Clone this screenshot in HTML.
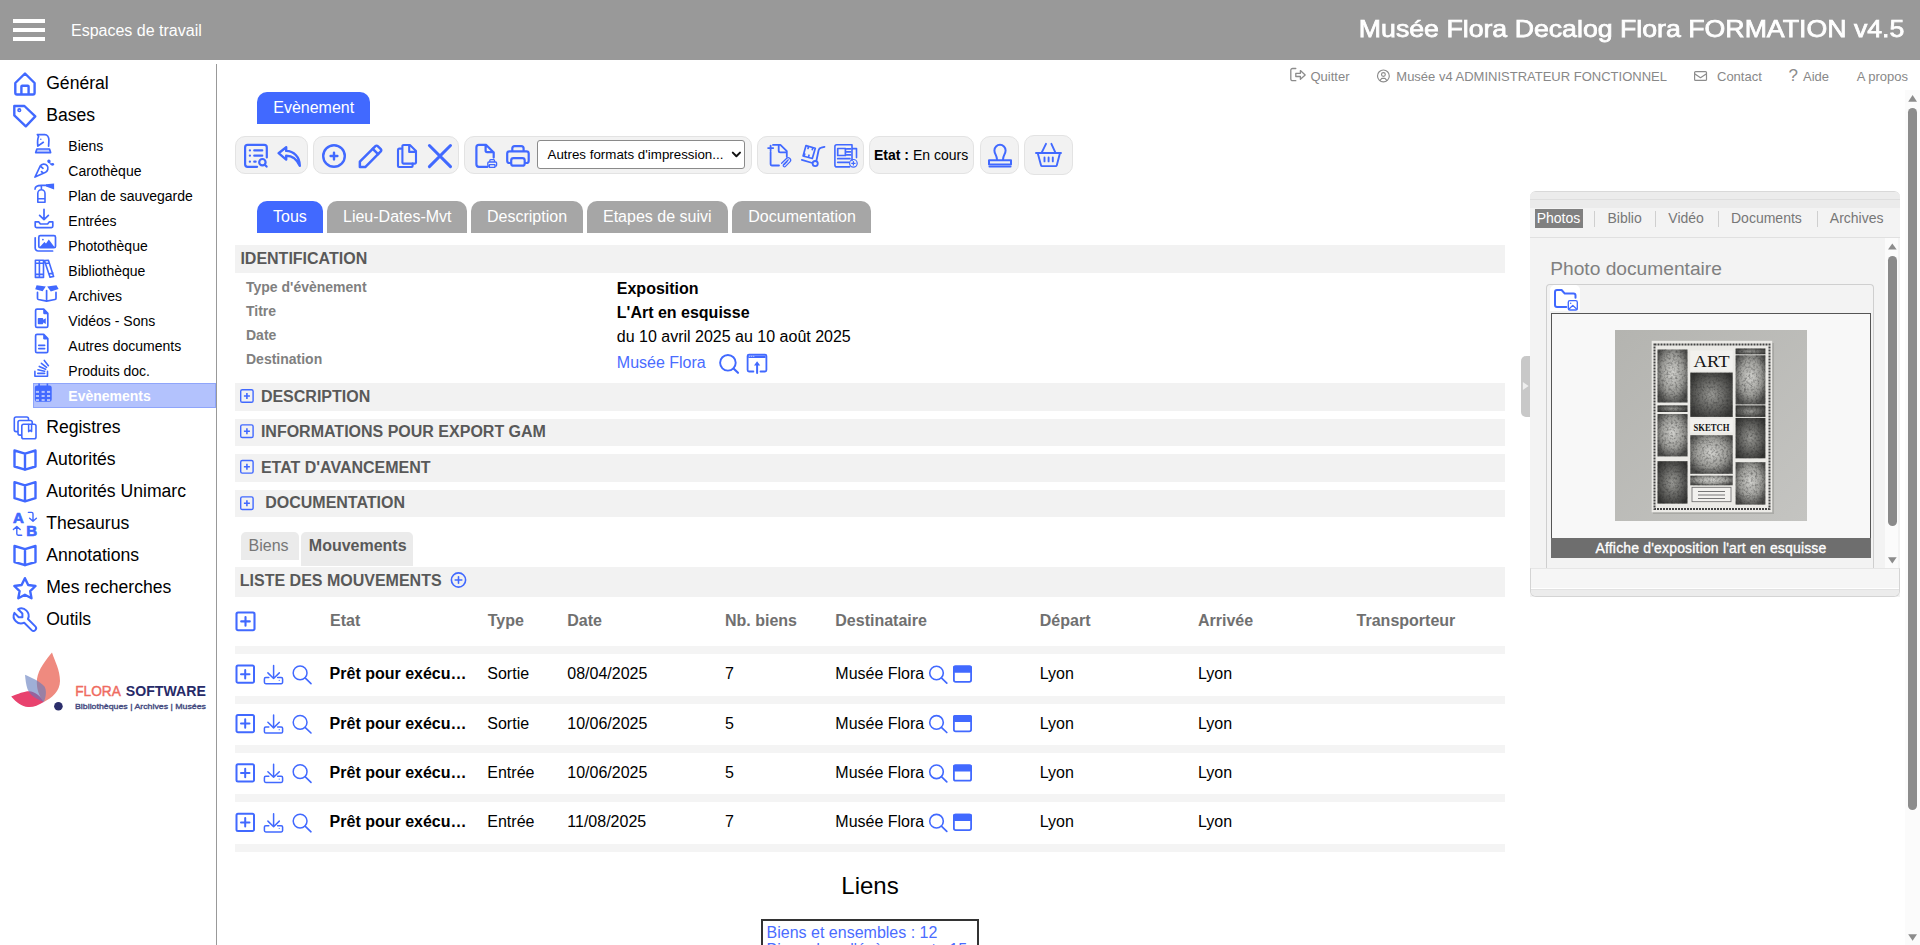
<!DOCTYPE html><html><head><meta charset="utf-8"><style>
html,body{margin:0;padding:0;}
body{width:1920px;height:945px;overflow:hidden;position:relative;background:#fff;font-family:"Liberation Sans",sans-serif;}
.t{position:absolute;white-space:nowrap;line-height:1;}
.r{position:absolute;}
svg.ov{position:absolute;left:0;top:0;}
</style></head><body>
<div class="r" style="left:0px;top:0px;width:1920px;height:60px;background:#999999;"></div>
<div class="r" style="left:13px;top:19px;width:32px;height:4px;background:#fff;"></div>
<div class="r" style="left:13px;top:28px;width:32px;height:4px;background:#fff;"></div>
<div class="r" style="left:13px;top:37px;width:32px;height:4px;background:#fff;"></div>
<div class="t" style="left:71px;top:23.00px;font-size:16px;color:#fff;font-weight:normal;">Espaces de travail</div>
<div class="t" style="right:15.4px;top:17px;font-size:24px;color:#fff;font-weight:normal;-webkit-text-stroke:0.75px #fff;transform:scaleX(1.1125);transform-origin:100% 50%;">Musée Flora Decalog Flora FORMATION v4.5</div>
<div class="r" style="left:216px;top:64px;width:1px;height:881px;background:#999999;"></div>
<div class="t" style="left:46.2px;top:75.00px;font-size:17.6px;color:#000;font-weight:normal;">Général</div>
<div class="t" style="left:46.2px;top:107.00px;font-size:17.6px;color:#000;font-weight:normal;">Bases</div>
<div class="t" style="left:46.2px;top:419.00px;font-size:17.6px;color:#000;font-weight:normal;">Registres</div>
<div class="t" style="left:46.2px;top:451.00px;font-size:17.6px;color:#000;font-weight:normal;">Autorités</div>
<div class="t" style="left:46.2px;top:483.00px;font-size:17.6px;color:#000;font-weight:normal;">Autorités Unimarc</div>
<div class="t" style="left:46.2px;top:515.00px;font-size:17.6px;color:#000;font-weight:normal;">Thesaurus</div>
<div class="t" style="left:46.2px;top:547.00px;font-size:17.6px;color:#000;font-weight:normal;">Annotations</div>
<div class="t" style="left:46.2px;top:579.00px;font-size:17.6px;color:#000;font-weight:normal;">Mes recherches</div>
<div class="t" style="left:46.2px;top:611.00px;font-size:17.6px;color:#000;font-weight:normal;">Outils</div>
<div class="r" style="left:33px;top:383px;width:183px;height:25px;background:#b3c2fd;box-sizing:border-box;border:1px solid #8fa5fb;"></div>
<div class="t" style="left:68.3px;top:139.00px;font-size:14px;color:#000;font-weight:normal;">Biens</div>
<div class="t" style="left:68.3px;top:164.00px;font-size:14px;color:#000;font-weight:normal;">Carothèque</div>
<div class="t" style="left:68.3px;top:189.00px;font-size:14px;color:#000;font-weight:normal;">Plan de sauvegarde</div>
<div class="t" style="left:68.3px;top:214.00px;font-size:14px;color:#000;font-weight:normal;">Entrées</div>
<div class="t" style="left:68.3px;top:239.00px;font-size:14px;color:#000;font-weight:normal;">Photothèque</div>
<div class="t" style="left:68.3px;top:264.00px;font-size:14px;color:#000;font-weight:normal;">Bibliothèque</div>
<div class="t" style="left:68.3px;top:289.00px;font-size:14px;color:#000;font-weight:normal;">Archives</div>
<div class="t" style="left:68.3px;top:314.00px;font-size:14px;color:#000;font-weight:normal;">Vidéos - Sons</div>
<div class="t" style="left:68.3px;top:339.00px;font-size:14px;color:#000;font-weight:normal;">Autres documents</div>
<div class="t" style="left:68.3px;top:364.00px;font-size:14px;color:#000;font-weight:normal;">Produits doc.</div>
<div class="t" style="left:68.3px;top:389.00px;font-size:14px;color:#fff;font-weight:bold;">Evènements</div>
<div class="t" style="left:1310.5px;top:70.00px;font-size:13px;color:#888;font-weight:normal;">Quitter</div>
<div class="t" style="left:1396.3px;top:70.00px;font-size:13px;color:#888;font-weight:normal;">Musée v4 ADMINISTRATEUR FONCTIONNEL</div>
<div class="t" style="left:1717px;top:70.00px;font-size:13px;color:#888;font-weight:normal;">Contact</div>
<div class="t" style="left:1803px;top:70.00px;font-size:13px;color:#888;font-weight:normal;">Aide</div>
<div class="t" style="left:1856.7px;top:70.00px;font-size:13px;color:#888;font-weight:normal;">A propos</div>
<div class="r" style="left:1905px;top:90px;width:15px;height:855px;background:#fbfbfb;"></div>
<div class="r" style="left:1908px;top:108px;width:9px;height:702px;background:#8c8c8c;border-radius:5px;"></div>
<div class="r" style="left:257px;top:92px;width:113px;height:32px;background:#4169ff;border-radius:10px 10px 0 0;"></div>
<div class="t" style="left:273.25px;top:100.00px;font-size:16px;color:#fff;font-weight:normal;">Evènement</div>
<div class="r" style="left:235px;top:136px;width:73px;height:38px;background:#f2f2f2;box-sizing:border-box;border:1px solid #e3e3e3;border-radius:10px;"></div>
<div class="r" style="left:313px;top:136px;width:146px;height:38px;background:#f2f2f2;box-sizing:border-box;border:1px solid #e3e3e3;border-radius:10px;"></div>
<div class="r" style="left:464px;top:136px;width:288px;height:38px;background:#f2f2f2;box-sizing:border-box;border:1px solid #e3e3e3;border-radius:10px;"></div>
<div class="r" style="left:757px;top:136px;width:107px;height:38px;background:#f2f2f2;box-sizing:border-box;border:1px solid #e3e3e3;border-radius:10px;"></div>
<div class="r" style="left:869px;top:136px;width:104.5px;height:38px;background:#f2f2f2;box-sizing:border-box;border:1px solid #e3e3e3;border-radius:10px;"></div>
<div class="r" style="left:979.5px;top:136px;width:39.0px;height:38px;background:#f2f2f2;box-sizing:border-box;border:1px solid #e3e3e3;border-radius:10px;"></div>
<div class="r" style="left:1024px;top:135px;width:48.5px;height:40px;background:#f2f2f2;box-sizing:border-box;border:1px solid #e3e3e3;border-radius:10px;"></div>
<div class="r" style="left:537px;top:140px;width:208px;height:29px;background:#fff;box-sizing:border-box;border:1px solid #8a8a8a;border-radius:3px;"></div>
<div class="t" style="left:547.5px;top:148.00px;font-size:13.333px;color:#000;font-weight:normal;">Autres formats d'impression...</div>
<div class="t" style="left:874px;top:148px;font-size:14px;"><b>Etat :</b> En cours</div>
<div class="r" style="left:257px;top:201px;width:66px;height:32px;background:#4169ff;border-radius:10px 10px 0 0;"></div>
<div class="t" style="left:273px;top:209.00px;font-size:16px;color:#fff;font-weight:normal;">Tous</div>
<div class="r" style="left:327px;top:201px;width:140px;height:32px;background:#a6a6a6;border-radius:10px 10px 0 0;"></div>
<div class="t" style="left:343px;top:209.00px;font-size:16px;color:#fff;font-weight:normal;">Lieu-Dates-Mvt</div>
<div class="r" style="left:471px;top:201px;width:112px;height:32px;background:#a6a6a6;border-radius:10px 10px 0 0;"></div>
<div class="t" style="left:487px;top:209.00px;font-size:16px;color:#fff;font-weight:normal;">Description</div>
<div class="r" style="left:587px;top:201px;width:141px;height:32px;background:#a6a6a6;border-radius:10px 10px 0 0;"></div>
<div class="t" style="left:603px;top:209.00px;font-size:16px;color:#fff;font-weight:normal;">Etapes de suivi</div>
<div class="r" style="left:732px;top:201px;width:139px;height:32px;background:#a6a6a6;border-radius:10px 10px 0 0;"></div>
<div class="t" style="left:748.3px;top:209.00px;font-size:16px;color:#fff;font-weight:normal;">Documentation</div>
<div class="r" style="left:235px;top:245px;width:1270px;height:28px;background:#f2f2f2;"></div>
<div class="t" style="left:240.4px;top:251.00px;font-size:16px;color:#595959;font-weight:bold;">IDENTIFICATION</div>
<div class="t" style="left:246px;top:280.00px;font-size:14px;color:#808080;font-weight:bold;">Type d'évènement</div>
<div class="t" style="left:246px;top:304.00px;font-size:14px;color:#808080;font-weight:bold;">Titre</div>
<div class="t" style="left:246px;top:328.00px;font-size:14px;color:#808080;font-weight:bold;">Date</div>
<div class="t" style="left:246px;top:352.00px;font-size:14px;color:#808080;font-weight:bold;">Destination</div>
<div class="t" style="left:616.8px;top:281.00px;font-size:16px;color:#000;font-weight:bold;">Exposition</div>
<div class="t" style="left:616.8px;top:305.00px;font-size:16px;color:#000;font-weight:bold;">L'Art en esquisse</div>
<div class="t" style="left:616.8px;top:329.00px;font-size:16px;color:#000;font-weight:normal;">du 10 avril 2025 au 10 août 2025</div>
<div class="t" style="left:616.8px;top:355.00px;font-size:16px;color:#4a6cff;font-weight:normal;">Musée Flora</div>
<div class="r" style="left:235px;top:383px;width:1270px;height:28px;background:#f2f2f2;"></div>
<div class="t" style="left:260.9px;top:389.00px;font-size:16px;color:#595959;font-weight:bold;">DESCRIPTION</div>
<div class="r" style="left:235px;top:419px;width:1270px;height:27px;background:#f2f2f2;"></div>
<div class="t" style="left:260.9px;top:424.00px;font-size:16px;color:#595959;font-weight:bold;">INFORMATIONS POUR EXPORT GAM</div>
<div class="r" style="left:235px;top:454px;width:1270px;height:28px;background:#f2f2f2;"></div>
<div class="t" style="left:260.9px;top:460.00px;font-size:16px;color:#595959;font-weight:bold;">ETAT D'AVANCEMENT</div>
<div class="r" style="left:235px;top:490px;width:1270px;height:27px;background:#f2f2f2;"></div>
<div class="t" style="left:265.2px;top:495.00px;font-size:16px;color:#595959;font-weight:bold;">DOCUMENTATION</div>
<div class="r" style="left:241px;top:532px;width:58px;height:28px;background:#ebebeb;border-radius:5px 5px 0 0;"></div>
<div class="r" style="left:301px;top:532px;width:112px;height:34px;background:#ebebeb;border-radius:5px 5px 0 0;"></div>
<div class="t" style="left:248.5px;top:538.00px;font-size:16px;color:#777;font-weight:normal;">Biens</div>
<div class="t" style="left:308.8px;top:538.00px;font-size:16px;color:#595959;font-weight:bold;">Mouvements</div>
<div class="r" style="left:235px;top:567px;width:1270px;height:30px;background:#f2f2f2;"></div>
<div class="t" style="left:239.8px;top:573.00px;font-size:16px;color:#595959;font-weight:bold;">LISTE DES MOUVEMENTS</div>
<div class="t" style="left:330px;top:613.00px;font-size:16px;color:#707070;font-weight:bold;">Etat</div>
<div class="t" style="left:487.7px;top:613.00px;font-size:16px;color:#707070;font-weight:bold;">Type</div>
<div class="t" style="left:567.3px;top:613.00px;font-size:16px;color:#707070;font-weight:bold;">Date</div>
<div class="t" style="left:725px;top:613.00px;font-size:16px;color:#707070;font-weight:bold;">Nb. biens</div>
<div class="t" style="left:835.3px;top:613.00px;font-size:16px;color:#707070;font-weight:bold;">Destinataire</div>
<div class="t" style="left:1039.8px;top:613.00px;font-size:16px;color:#707070;font-weight:bold;">Départ</div>
<div class="t" style="left:1198px;top:613.00px;font-size:16px;color:#707070;font-weight:bold;">Arrivée</div>
<div class="t" style="left:1356.6px;top:613.00px;font-size:16px;color:#707070;font-weight:bold;">Transporteur</div>
<div class="r" style="left:235px;top:646px;width:1270px;height:8px;background:#f4f4f4;"></div>
<div class="r" style="left:235px;top:696px;width:1270px;height:8px;background:#f4f4f4;"></div>
<div class="r" style="left:235px;top:745px;width:1270px;height:8px;background:#f4f4f4;"></div>
<div class="r" style="left:235px;top:794px;width:1270px;height:8px;background:#f4f4f4;"></div>
<div class="r" style="left:235px;top:844px;width:1270px;height:8px;background:#f4f4f4;"></div>
<div class="t" style="left:329.6px;top:666.00px;font-size:16px;color:#000;font-weight:bold;">Prêt pour exécu…</div>
<div class="t" style="left:487.3px;top:666.00px;font-size:16px;color:#000;font-weight:normal;">Sortie</div>
<div class="t" style="left:567.3px;top:666.00px;font-size:16px;color:#000;font-weight:normal;">08/04/2025</div>
<div class="t" style="left:725px;top:666.00px;font-size:16px;color:#000;font-weight:normal;">7</div>
<div class="t" style="left:835.3px;top:666.00px;font-size:16px;color:#000;font-weight:normal;">Musée Flora</div>
<div class="t" style="left:1039.8px;top:666.00px;font-size:16px;color:#000;font-weight:normal;">Lyon</div>
<div class="t" style="left:1198px;top:666.00px;font-size:16px;color:#000;font-weight:normal;">Lyon</div>
<div class="t" style="left:329.6px;top:716.00px;font-size:16px;color:#000;font-weight:bold;">Prêt pour exécu…</div>
<div class="t" style="left:487.3px;top:716.00px;font-size:16px;color:#000;font-weight:normal;">Sortie</div>
<div class="t" style="left:567.3px;top:716.00px;font-size:16px;color:#000;font-weight:normal;">10/06/2025</div>
<div class="t" style="left:725px;top:716.00px;font-size:16px;color:#000;font-weight:normal;">5</div>
<div class="t" style="left:835.3px;top:716.00px;font-size:16px;color:#000;font-weight:normal;">Musée Flora</div>
<div class="t" style="left:1039.8px;top:716.00px;font-size:16px;color:#000;font-weight:normal;">Lyon</div>
<div class="t" style="left:1198px;top:716.00px;font-size:16px;color:#000;font-weight:normal;">Lyon</div>
<div class="t" style="left:329.6px;top:765.00px;font-size:16px;color:#000;font-weight:bold;">Prêt pour exécu…</div>
<div class="t" style="left:487.3px;top:765.00px;font-size:16px;color:#000;font-weight:normal;">Entrée</div>
<div class="t" style="left:567.3px;top:765.00px;font-size:16px;color:#000;font-weight:normal;">10/06/2025</div>
<div class="t" style="left:725px;top:765.00px;font-size:16px;color:#000;font-weight:normal;">5</div>
<div class="t" style="left:835.3px;top:765.00px;font-size:16px;color:#000;font-weight:normal;">Musée Flora</div>
<div class="t" style="left:1039.8px;top:765.00px;font-size:16px;color:#000;font-weight:normal;">Lyon</div>
<div class="t" style="left:1198px;top:765.00px;font-size:16px;color:#000;font-weight:normal;">Lyon</div>
<div class="t" style="left:329.6px;top:814.00px;font-size:16px;color:#000;font-weight:bold;">Prêt pour exécu…</div>
<div class="t" style="left:487.3px;top:814.00px;font-size:16px;color:#000;font-weight:normal;">Entrée</div>
<div class="t" style="left:567.3px;top:814.00px;font-size:16px;color:#000;font-weight:normal;">11/08/2025</div>
<div class="t" style="left:725px;top:814.00px;font-size:16px;color:#000;font-weight:normal;">7</div>
<div class="t" style="left:835.3px;top:814.00px;font-size:16px;color:#000;font-weight:normal;">Musée Flora</div>
<div class="t" style="left:1039.8px;top:814.00px;font-size:16px;color:#000;font-weight:normal;">Lyon</div>
<div class="t" style="left:1198px;top:814.00px;font-size:16px;color:#000;font-weight:normal;">Lyon</div>
<div class="t" style="left:235px;width:1270px;text-align:center;top:874px;font-size:24px;">Liens</div>
<div class="r" style="left:761px;top:919px;width:218px;height:81px;background:#fff;box-sizing:border-box;border:2px solid #333;"></div>
<div class="t" style="left:766.6px;top:925.00px;font-size:16px;color:#4a6cff;font-weight:normal;">Biens et ensembles : 12</div>
<div class="t" style="left:766.6px;top:942.00px;font-size:16px;color:#4a6cff;font-weight:normal;">Biens dans l'évènement : 15</div>
<div class="r" style="left:1530px;top:191px;width:370px;height:406px;background:#f3f3f3;box-sizing:border-box;border-top:1px solid #d9d9d9;border-radius:6px 6px 0 0;"></div>
<div class="r" style="left:1530px;top:192px;width:370px;height:7px;background:#ececec;border-radius:5px 5px 0 0;"></div>
<div class="r" style="left:1530px;top:199px;width:370px;height:1px;background:#dedede;"></div>
<div class="r" style="left:1530px;top:200px;width:370px;height:8px;background:#ebebeb;"></div>
<div class="r" style="left:1530px;top:208px;width:370px;height:29px;background:#f3f3f3;"></div>
<div class="r" style="left:1530px;top:237px;width:370px;height:1px;background:#e0e0e0;"></div>
<div class="r" style="left:1535px;top:209px;width:48px;height:19px;background:#808080;"></div>
<div class="t" style="left:1536.7px;top:211.00px;font-size:14px;color:#fff;font-weight:normal;">Photos</div>
<div class="r" style="left:1594.4px;top:211px;width:1.0px;height:16px;background:#cfcfcf;"></div>
<div class="r" style="left:1655.4px;top:211px;width:1.0px;height:16px;background:#cfcfcf;"></div>
<div class="r" style="left:1717.9px;top:211px;width:1.0px;height:16px;background:#cfcfcf;"></div>
<div class="r" style="left:1816.5px;top:211px;width:1.0px;height:16px;background:#cfcfcf;"></div>
<div class="t" style="left:1607.5px;top:211.00px;font-size:14px;color:#777;font-weight:normal;">Biblio</div>
<div class="t" style="left:1668.3px;top:211.00px;font-size:14px;color:#777;font-weight:normal;">Vidéo</div>
<div class="t" style="left:1731px;top:211.00px;font-size:14px;color:#777;font-weight:normal;">Documents</div>
<div class="t" style="left:1829.8px;top:211.00px;font-size:14px;color:#777;font-weight:normal;">Archives</div>
<div class="r" style="left:1884.7px;top:238px;width:13.799999999999955px;height:329.5px;background:#fbfbfb;"></div>
<div class="r" style="left:1888.2px;top:256px;width:8.5px;height:269.70000000000005px;background:#8a8a8a;border-radius:5px;"></div>
<div class="t" style="left:1550.2px;top:259.00px;font-size:19.2px;color:#808080;font-weight:normal;">Photo documentaire</div>
<div class="r" style="left:1546px;top:284px;width:328px;height:286px;background:#f3f3f3;box-sizing:border-box;border:1px solid #cfcfcf;border-bottom:none;border-radius:4px 4px 0 0;"></div>
<div class="r" style="left:1550px;top:284.5px;width:30px;height:26.5px;background:#fff;border-radius:5px 5px 0 0;"></div>
<div class="r" style="left:1551px;top:312.8px;width:320px;height:245.2px;background:#f8f8f8;box-sizing:border-box;border:1px solid #555;border-bottom:none;"></div>
<div class="r" style="left:1551px;top:538px;width:320px;height:20px;background:#6e6e6e;"></div>
<div class="t" style="left:1551px;width:320px;text-align:center;top:541px;font-size:14px;color:#fff;letter-spacing:0.17px;-webkit-text-stroke:0.3px #fff;">Affiche d'exposition l'art en esquisse</div>
<div class="r" style="left:1530px;top:568px;width:370px;height:29px;background:#f6f6f6;box-sizing:border-box;border:1px solid #d4d4d4;border-top-color:#e6e6e6;border-radius:0 0 6px 6px;"></div>
<div class="r" style="left:1531px;top:588px;width:368px;height:1px;background:#ffffff;"></div>
<div class="r" style="left:1531px;top:589px;width:368px;height:1px;background:#e2e2e2;"></div>
<div class="r" style="left:1531px;top:590px;width:368px;height:6px;background:#ececec;border-radius:0 0 5px 5px;"></div>
<div class="r" style="left:1521px;top:356px;width:9px;height:61px;background:#c8c8c8;border-radius:5px 0 0 5px;"></div>
<svg class="ov" width="1920" height="945" viewBox="0 0 1920 945"><path d="M52 652.6 C46 660 38.5 669 37 679 C36 688 39 696 43.8 702 C52 698 60 691 60 681 C60 670 55 662 52 652.6 Z" fill="#ef8a7f"/><path d="M11.2 696.4 C18 693.8 24.5 691.2 29 691.2 C35 691.5 40.5 696 43.8 702 C38 705.5 33 707.5 28 707 C22 706.5 16 702 11.2 696.4 Z" fill="#e8426e"/><path d="M25 674.8 C31 677.5 39.5 681 44.5 686.5 C46.5 690 46.5 696 43.8 702 C36 699 30 695.5 27.5 689 C26 685 25.5 680 25 674.8 Z" fill="#5f79bd" fill-opacity="0.6"/><circle cx="58.4" cy="706.2" r="4.3" fill="#2b2e6b"/><text x="75.2" y="695.6" font-family="Liberation Sans" font-size="15" fill="#ef6b60" stroke="#ef6b60" stroke-width="0.45" textLength="45.6" lengthAdjust="spacingAndGlyphs">FLORA</text><text x="125.8" y="695.6" font-family="Liberation Sans" font-weight="bold" font-size="15" fill="#272a68" textLength="80" lengthAdjust="spacingAndGlyphs">SOFTWARE</text><text x="75" y="709.4" font-family="Liberation Sans" font-size="8" fill="#454a80" stroke="#454a80" stroke-width="0.35" textLength="131" lengthAdjust="spacingAndGlyphs">Bibliothèques | Archives | Musées</text><defs><linearGradient id="pg" x1="0" y1="0" x2="1" y2="1"><stop offset="0" stop-color="#b4b4b0"/><stop offset="1" stop-color="#c4c4c1"/></linearGradient><filter id="tex" x="0" y="0" width="1" height="1"><feTurbulence type="fractalNoise" baseFrequency="0.45" numOctaves="2" seed="3" result="n"/><feColorMatrix in="n" type="matrix" values="0 0 0 0 0  0 0 0 0 0  0 0 0 0 0  0 0 0 -2.2 1.25" result="a"/><feComposite in="SourceGraphic" in2="a" operator="in"/></filter><radialGradient id="por" cx="0.5" cy="0.45" r="0.6"><stop offset="0" stop-color="#d2d2ce"/><stop offset="0.6" stop-color="#9c9c98"/><stop offset="1" stop-color="#4a4a48"/></radialGradient><radialGradient id="drk" cx="0.5" cy="0.5" r="0.6"><stop offset="0" stop-color="#9a9a96"/><stop offset="1" stop-color="#353533"/></radialGradient></defs><rect x="1615" y="330" width="192" height="191" fill="url(#pg)"/><rect x="1653" y="343" width="121" height="171" fill="#8e8e8a" opacity="0.45"/><rect x="1651.7" y="340.8" width="120.5" height="171.5" fill="#ebeae6"/><rect x="1654.5" y="344.5" width="115" height="164.5" fill="none" stroke="#444" stroke-width="2" stroke-dasharray="2 1"/><rect x="1657.5" y="349.5" width="30" height="53" fill="url(#por)"/><rect x="1657.5" y="349.5" width="30" height="53" fill="#222" filter="url(#tex)" opacity="0.45"/><rect x="1657.5" y="405.4" width="30" height="6.6" fill="url(#drk)"/><rect x="1657.5" y="405.4" width="30" height="6.6" fill="#222" filter="url(#tex)" opacity="0.45"/><rect x="1657.5" y="414" width="30" height="42.4" fill="url(#por)"/><rect x="1657.5" y="414" width="30" height="42.4" fill="#222" filter="url(#tex)" opacity="0.45"/><rect x="1657.5" y="461.2" width="30" height="42.4" fill="url(#drk)"/><rect x="1657.5" y="461.2" width="30" height="42.4" fill="#222" filter="url(#tex)" opacity="0.45"/><rect x="1690.3" y="372.6" width="42.4" height="44.3" fill="url(#drk)"/><rect x="1690.3" y="372.6" width="42.4" height="44.3" fill="#222" filter="url(#tex)" opacity="0.45"/><rect x="1690.3" y="435.2" width="42.4" height="38.6" fill="url(#por)"/><rect x="1690.3" y="435.2" width="42.4" height="38.6" fill="#222" filter="url(#tex)" opacity="0.45"/><rect x="1690.3" y="475.7" width="42.4" height="9.6" fill="url(#por)"/><rect x="1690.3" y="475.7" width="42.4" height="9.6" fill="#222" filter="url(#tex)" opacity="0.45"/><rect x="1735.6" y="355.3" width="29.8" height="49.1" fill="url(#por)"/><rect x="1735.6" y="355.3" width="29.8" height="49.1" fill="#222" filter="url(#tex)" opacity="0.45"/><rect x="1735.6" y="405.4" width="29.8" height="11.5" fill="url(#drk)"/><rect x="1735.6" y="405.4" width="29.8" height="11.5" fill="#222" filter="url(#tex)" opacity="0.45"/><rect x="1735.6" y="417.9" width="29.8" height="40.4" fill="url(#drk)"/><rect x="1735.6" y="417.9" width="29.8" height="40.4" fill="#222" filter="url(#tex)" opacity="0.45"/><rect x="1735.6" y="462.2" width="29.8" height="42.4" fill="url(#por)"/><rect x="1735.6" y="462.2" width="29.8" height="42.4" fill="#222" filter="url(#tex)" opacity="0.45"/><rect x="1735.6" y="348.5" width="29.8" height="5.8" fill="url(#drk)"/><rect x="1735.6" y="348.5" width="29.8" height="5.8" fill="#222" filter="url(#tex)" opacity="0.45"/><rect x="1690.3" y="350.5" width="42.4" height="20.2" fill="#f2f1ee"/><text x="1711.5" y="366.5" font-family="Liberation Serif" font-size="17.5" text-anchor="middle" fill="#151515" textLength="36" lengthAdjust="spacingAndGlyphs">ART</text><rect x="1690.3" y="418.8" width="42.4" height="13.5" fill="#f2f1ee"/><text x="1711.5" y="430.6" font-family="Liberation Serif" font-weight="bold" font-size="9.5" text-anchor="middle" fill="#151515" textLength="36" lengthAdjust="spacingAndGlyphs">SKETCH</text><rect x="1692" y="487.3" width="39" height="14.4" fill="#f2f1ee" stroke="#666" stroke-width="0.8"/><rect x="1698" y="491" width="27" height="1" fill="#777"/><rect x="1698" y="494.5" width="27" height="1" fill="#777"/><rect x="1698" y="498" width="27" height="1" fill="#777"/></svg>
<svg class="ov" width="1920" height="945" viewBox="0 0 1920 945"><path d="M15.3 83 V92.8 a1.7 1.7 0 0 0 1.7 1.7 H32.9 a1.7 1.7 0 0 0 1.7 -1.7 V83 L25 73.5 Z M21.4 94.5 V86.5 a0.8 0.8 0 0 1 0.8 -0.8 H27.8 a0.8 0.8 0 0 1 0.8 0.8 V94.5" fill="none" stroke="#4169ff" stroke-width="2.4" stroke-linecap="round" stroke-linejoin="round" /><path d="M14.3 106 H24.4 L35.3 116.4 L25.8 126.3 L14.3 115.3 Z" fill="none" stroke="#4169ff" stroke-width="2.4" stroke-linecap="round" stroke-linejoin="round" /><circle cx="19.3" cy="110.2" r="1.3" fill="none" stroke="#4169ff" stroke-width="1.6"/><rect x="14.3" y="417" width="14.2" height="14.6" rx="1.8" fill="#fff" stroke="#4169ff" stroke-width="1.6"/><rect x="18" y="420.5" width="14.2" height="14.6" rx="1.8" fill="#fff" stroke="#4169ff" stroke-width="1.6"/><rect x="21.8" y="424.2" width="14.2" height="14.6" rx="1.8" fill="#fff" stroke="#4169ff" stroke-width="1.6"/><path d="M31.6 424.4 V431.6 L30.1 430.2 L28.6 431.6 V424.4" fill="none" stroke="#4169ff" stroke-width="1.5" stroke-linecap="round" stroke-linejoin="round" /><path d="M14.5 450.5 L25 453.7 L35.5 450.5 V466.5 L25 469.7 L14.5 466.5 Z M25 453.7 V469.7" fill="none" stroke="#4169ff" stroke-width="2.4" stroke-linecap="round" stroke-linejoin="round" /><path d="M14.5 482.2 L25 485.4 L35.5 482.2 V498.2 L25 501.4 L14.5 498.2 Z M25 485.4 V501.4" fill="none" stroke="#4169ff" stroke-width="2.4" stroke-linecap="round" stroke-linejoin="round" /><path d="M14.5 546 L25 549.2 L35.5 546 V562 L25 565.2 L14.5 562 Z M25 549.2 V565.2" fill="none" stroke="#4169ff" stroke-width="2.4" stroke-linecap="round" stroke-linejoin="round" /><text x="13.1" y="522.8" font-family="Liberation Sans" font-weight="bold" font-size="15" fill="#4169ff" stroke="#4169ff" stroke-width="0.7">A</text><text x="26.2" y="535.8" font-family="Liberation Sans" font-weight="bold" font-size="15" fill="#4169ff" stroke="#4169ff" stroke-width="0.7">B</text><path d="M28.4 512.4 H31.6 a1.4 1.4 0 0 1 1.4 1.4 V520.8 M29.6 518.2 L33 521.2 L36.4 518.2" fill="none" stroke="#4169ff" stroke-width="1.4" stroke-linecap="round" stroke-linejoin="round" /><path d="M21.7 535.2 H18.2 a1.4 1.4 0 0 1 -1.4 -1.4 V526.6 M13.4 529.6 L16.8 526.4 L20.2 529.6" fill="none" stroke="#4169ff" stroke-width="1.4" stroke-linecap="round" stroke-linejoin="round" /><path d="M24.9 578.2 L28.2 585 L35.5 586 L30.2 591.1 L31.5 598.3 L24.9 594.8 L18.3 598.3 L19.6 591.1 L14.3 586 L21.6 585 Z" fill="none" stroke="#4169ff" stroke-width="2.4" stroke-linecap="round" stroke-linejoin="round" /><g transform="translate(10.1 604.9) scale(1.2291666666666667)" fill="none" stroke="#4169ff" stroke-width="1.6" stroke-linecap="round" stroke-linejoin="round"><path d="M7 10h3v-3l-3.5 -3.5a6 6 0 0 1 8 8l6 6a2 2 0 0 1 -3 3l-6 -6a6 6 0 0 1 -8 -8l3.5 3.5"/></g><path d="M37.4 134.6 H44.8 C47.2 134.6 48.9 137 48.9 140.3 L48.6 146.1 M37.4 134.6 L38.6 136.6 C37.5 138.5 37.3 141 37.8 146.1 L43.3 142.3" fill="none" stroke="#4169ff" stroke-width="1.7" stroke-linecap="round" stroke-linejoin="round" /><circle cx="40.8" cy="139.3" r="0.75" fill="#4169ff" stroke="none" stroke-width="0"/><path d="M36.9 149 H49.5 L50.6 152.6 H35.7 Z" fill="#c0ccff" stroke="#4169ff" stroke-width="1.7" stroke-linecap="round" stroke-linejoin="round" /><path d="M35 177.1 L40.2 166 C41.5 163.8 45.3 163.3 47.2 165.8 C48.8 168 47.6 171.2 45.6 172.2 Z M40.2 166 L43 168.3 M41.5 171.6 L42.5 172.5" fill="none" stroke="#4169ff" stroke-width="1.7" stroke-linecap="round" stroke-linejoin="round" /><path d="M47.3 160.6 C48.4 158.9 50.6 159.5 50.6 161.5 L50.2 163.8 C48.6 163.6 46.8 162.3 47.3 160.6 Z M49.6 163.6 L52.6 162.9 C54.2 162.8 54.8 164.5 53.8 165.3 C52.4 166.2 50.6 165.6 49.6 163.6 Z" fill="#4169ff"/><path d="M37.8 202.3 V193.4 a3.6 3.6 0 0 1 7.2 0 V202.3 Z M37.8 198.8 H45 M41.4 189.8 V185.4 M35 189.2 C35 186.6 37.6 185.4 41.4 185.4 H46.4" fill="none" stroke="#4169ff" stroke-width="1.6" stroke-linecap="round" stroke-linejoin="round" /><path d="M46 184.2 L54.1 183.5 V189.4 L46 186.6 Z" fill="#4169ff"/><path d="M44 209.3 V219.6 M39.6 215.4 L44 219.6 L48.4 215.4 M35.2 221.9 H38.8 L40.4 224 H47.6 L49.2 221.9 H52.8 V226.3 a1.3 1.3 0 0 1 -1.3 1.3 H36.5 a1.3 1.3 0 0 1 -1.3 -1.3 Z" fill="none" stroke="#4169ff" stroke-width="1.7" stroke-linecap="round" stroke-linejoin="round" /><path d="M38.8 246.2 V237.2 a1.5 1.5 0 0 1 1.5 -1.5 H54 a1.5 1.5 0 0 1 1.5 1.5 V246.2 a1.5 1.5 0 0 1 -1.5 1.5 H40.3 a1.5 1.5 0 0 1 -1.5 -1.5 Z M35.2 237.8 V248 a3 3 0 0 0 3 3 H52.6" fill="none" stroke="#4169ff" stroke-width="1.7" stroke-linecap="round" stroke-linejoin="round" /><path d="M39.8 247 L44.4 242 L46 243.4 L48.8 239.6 L54.4 247 Z" fill="#4169ff"/><circle cx="42.9" cy="239.6" r="0.9" fill="#4169ff" stroke="none" stroke-width="0"/><path d="M35.4 260.2 H39.4 V277.4 H35.4 Z M39.4 260.2 H43.5 V277.4 H39.4 Z M35.4 263.2 H43.5 M35.4 274.4 H43.5 M44.4 260.6 L48.4 260.2 L53.6 276.4 L50 277.2 Z M45.3 263.6 L49.2 263 M49.6 273.8 L53 273" fill="none" stroke="#4169ff" stroke-width="1.6" stroke-linecap="round" stroke-linejoin="round" /><path d="M36.6 285.2 L45.8 286.4 L42.6 291.3 L35.2 289.2 Z M47.2 286.4 L56.5 285.2 L58.6 288.9 L50.8 291.4 Z" fill="#4169ff"/><path d="M37.5 292.4 V298.3 a1.2 1.2 0 0 0 0.9 1.2 L46.6 301.2 L55 299.5 a1.2 1.2 0 0 0 1 -1.2 V292.4 M46.6 290.6 V300.8" fill="none" stroke="#4169ff" stroke-width="1.7" stroke-linecap="round" stroke-linejoin="round" /><path d="M35.6 310.5 a1.4 1.4 0 0 1 1.4 -1.4 H43.7 L47.8 313.4 V326 a1.4 1.4 0 0 1 -1.4 1.4 H37 a1.4 1.4 0 0 1 -1.4 -1.4 Z" fill="none" stroke="#4169ff" stroke-width="1.7" stroke-linecap="round" stroke-linejoin="round" /><path d="M43.2 309.3 H44 L47.8 313.2 V314.2 H44.4 a1.2 1.2 0 0 1 -1.2 -1.2 Z M37.8 318.8 a0.8 0.8 0 0 1 0.8 -0.8 H42.4 a0.8 0.8 0 0 1 0.8 0.8 V319.7 L45.8 318.2 V324 L43.2 322.6 V323.5 a0.8 0.8 0 0 1 -0.8 0.8 H38.6 a0.8 0.8 0 0 1 -0.8 -0.8 Z" fill="#4169ff"/><path d="M35.6 335.8 a1.4 1.4 0 0 1 1.4 -1.4 H43.7 L47.8 338.7 V351.3 a1.4 1.4 0 0 1 -1.4 1.4 H37 a1.4 1.4 0 0 1 -1.4 -1.4 Z M38.8 345.3 H44.6 M38.8 348.6 H44.6" fill="none" stroke="#4169ff" stroke-width="1.7" stroke-linecap="round" stroke-linejoin="round" /><path d="M43.2 334.6 H44 L47.8 338.5 V339.5 H44.4 a1.2 1.2 0 0 1 -1.2 -1.2 Z" fill="#4169ff"/><path d="M34.9 371.4 V376.3 H47.5 V371.4" fill="none" stroke="#4169ff" stroke-width="1.6" stroke-linecap="round" stroke-linejoin="round" /><path d="M37.8 373.4 H44.6 M38 369.7 L44.6 371.3 M39.3 366.4 L45.6 369.3 M41.4 363.3 L46.6 367.3 M44.3 360.4 L48.4 365.7" fill="none" stroke="#4169ff" stroke-width="1.6" stroke-linecap="round" stroke-linejoin="round" /><path d="M37 385.4 H49.5 a2.2 2.2 0 0 1 2.2 2.2 V399.6 a2.2 2.2 0 0 1 -2.2 2.2 H37 a2.2 2.2 0 0 1 -2.2 -2.2 V387.6 a2.2 2.2 0 0 1 2.2 -2.2 Z M38.3 383.4 h1.6 v3 h-1.6 Z M46.6 383.4 h1.6 v3 h-1.6 Z" fill="#4169ff"/><rect x="35.9" y="390.9" width="3.1" height="2" fill="#b3c2fd"/><rect x="35.9" y="395.0" width="3.1" height="2" fill="#b3c2fd"/><rect x="35.9" y="399.1" width="3.1" height="2" fill="#b3c2fd"/><rect x="41.6" y="390.9" width="3.1" height="2" fill="#b3c2fd"/><rect x="41.6" y="395.0" width="3.1" height="2" fill="#b3c2fd"/><rect x="41.6" y="399.1" width="3.1" height="2" fill="#b3c2fd"/><rect x="47.0" y="390.9" width="3.1" height="2" fill="#b3c2fd"/><rect x="47.0" y="395.0" width="3.1" height="2" fill="#b3c2fd"/><rect x="47.0" y="399.1" width="3.1" height="2" fill="#b3c2fd"/><path d="M1295.8 68.5 H1292.6 a1.8 1.8 0 0 0 -1.8 1.8 V78.9 a1.8 1.8 0 0 0 1.8 1.8 H1295.8" fill="none" stroke="#8c8c8c" stroke-width="1.3" stroke-linecap="round" stroke-linejoin="round" /><path d="M1295.8 73.3 H1300.4 V70.6 L1305.2 74.9 L1300.4 79.2 V76.5 H1295.8 Z" fill="none" stroke="#8c8c8c" stroke-width="1.3" stroke-linecap="round" stroke-linejoin="round" /><circle cx="1383.4" cy="75.9" r="5.9" fill="none" stroke="#8c8c8c" stroke-width="1.15"/><circle cx="1383.4" cy="74.5" r="1.9" fill="none" stroke="#8c8c8c" stroke-width="1.15"/><path d="M1380 80.6 L1381.3 78.8 a0.8 0.8 0 0 1 0.7 -0.4 H1384.8 a0.8 0.8 0 0 1 0.7 0.4 L1386.8 80.6" fill="none" stroke="#8c8c8c" stroke-width="1.15" stroke-linecap="round" stroke-linejoin="round" /><path d="M1695.6 71.6 H1705.5 a1 1 0 0 1 1 1 V79.4 a1 1 0 0 1 -1 1 H1695.6 a1 1 0 0 1 -1 -1 V72.6 a1 1 0 0 1 1 -1 Z M1694.6 73.8 L1700.5 77.7 L1706.5 73.8" fill="none" stroke="#8c8c8c" stroke-width="1.2" stroke-linecap="round" stroke-linejoin="round" /><text x="1788.6" y="80.8" font-family="Liberation Sans" font-size="17" fill="#8c8c8c">?</text><path d="M257.1 166.8 H247.6 a2.5 2.5 0 0 1 -2.5 -2.5 V147.4 a2.5 2.5 0 0 1 2.5 -2.5 H264.3 a2.5 2.5 0 0 1 2.5 2.5 V157.5" fill="none" stroke="#4169ff" stroke-width="2.2" stroke-linecap="round" stroke-linejoin="round" /><path d="M249.9 150.4 V150.4 M254.3 150.4 H262.2 M249.9 155.7 V155.7 M254.3 155.7 H262.2 M249.9 161.7 V161.7 M254.3 161.7 H255.6" fill="none" stroke="#4169ff" stroke-width="2.3" stroke-linecap="round" stroke-linejoin="round" /><circle cx="262.4" cy="162.2" r="3.2" fill="none" stroke="#4169ff" stroke-width="2.2"/><path d="M264.8 164.7 L266.6 166.6" fill="none" stroke="#4169ff" stroke-width="2.2" stroke-linecap="round" stroke-linejoin="round" /><path d="M286.2 147.3 L278.6 153.2 L286.2 159.6 V155.7 C292.2 155.7 296.8 158.8 299.8 165.8 C299.8 156.6 293.6 151.1 286.2 150.9 Z" fill="none" stroke="#4169ff" stroke-width="2.4" stroke-linecap="round" stroke-linejoin="round" /><circle cx="334" cy="156" r="10.8" fill="none" stroke="#4169ff" stroke-width="2.4"/><path d="M330.6 156 H337.4 M334 152.6 V159.4" fill="none" stroke="#4169ff" stroke-width="2.4" stroke-linecap="round" stroke-linejoin="round" /><g transform="translate(354.5 140.2) scale(1.3416666666666668)" fill="none" stroke="#4169ff" stroke-width="1.85" stroke-linecap="round" stroke-linejoin="round"><path d="M4 20h4l11.6 -11.6a1.2 1.2 0 0 0 0 -1.7l-2.3 -2.3a1.2 1.2 0 0 0 -1.7 0l-11.6 11.6v4"/><path d="M13.6 6.4l4 4"/></g><path d="M401.3 148.6 H399.1 a1.2 1.2 0 0 0 -1.1 1.2 V166 a1 1 0 0 0 1 1 H411.6 a1 1 0 0 0 1 -1 V163.6" fill="none" stroke="#4169ff" stroke-width="2.1" stroke-linecap="round" stroke-linejoin="round" /><path d="M402.4 146.2 a1.2 1.2 0 0 1 1.2 -1.2 H409.9 L416 151.1 V162.4 a1.2 1.2 0 0 1 -1.2 1.2 H403.6 a1.2 1.2 0 0 1 -1.2 -1.2 Z M409.2 145 V151.9 H416" fill="none" stroke="#4169ff" stroke-width="2.1" stroke-linecap="round" stroke-linejoin="round" /><path d="M429.4 145.5 L450.5 166.6 M450.5 145.5 L429.4 166.6" fill="none" stroke="#4169ff" stroke-width="3.0" stroke-linecap="round" stroke-linejoin="round" /><path d="M487.5 166.8 H478.9 a2.5 2.5 0 0 1 -2.5 -2.5 V147.4 a2.5 2.5 0 0 1 2.5 -2.5 H486.2 L493.7 152.6 V157.6 M485.6 145 V150.6 a1.5 1.5 0 0 0 1.5 1.5 H493.5" fill="none" stroke="#4169ff" stroke-width="2.2" stroke-linecap="round" stroke-linejoin="round" /><path d="M489.8 161.9 V160.6 a0.9 0.9 0 0 1 0.9 -0.9 H493.6 a0.9 0.9 0 0 1 0.9 0.9 V161.9 M489.3 166.2 H488.8 a1 1 0 0 1 -1 -1 V163 a1 1 0 0 1 1 -1 H495.6 a1 1 0 0 1 1 1 V165.2 a1 1 0 0 1 -1 1 H495 M489.4 164.7 H494.9 V167.3 H489.4 Z" fill="none" stroke="#4169ff" stroke-width="1.3" stroke-linecap="round" stroke-linejoin="round" /><path d="M512.3 151 V148.6 a2.4 2.4 0 0 1 2.4 -2.4 H521.2 a2.4 2.4 0 0 1 2.4 2.4 V151" fill="none" stroke="#4169ff" stroke-width="2.2" stroke-linecap="round" stroke-linejoin="round" /><path d="M511 163 H509.5 a2.3 2.3 0 0 1 -2.3 -2.3 V153.6 a2.3 2.3 0 0 1 2.3 -2.3 H526.4 a2.3 2.3 0 0 1 2.3 2.3 V160.7 a2.3 2.3 0 0 1 -2.3 2.3 H525" fill="none" stroke="#4169ff" stroke-width="2.2" stroke-linecap="round" stroke-linejoin="round" /><path d="M513.5 158.2 H522.4 a2.3 2.3 0 0 1 2.3 2.3 V163.4 a2.3 2.3 0 0 1 -2.3 2.3 H513.5 a2.3 2.3 0 0 1 -2.3 -2.3 V160.5 a2.3 2.3 0 0 1 2.3 -2.3 Z" fill="none" stroke="#4169ff" stroke-width="2.2" stroke-linecap="round" stroke-linejoin="round" /><path d="M732.8 152.6 L736.4 156.2 L740 152.6" fill="none" stroke="#111" stroke-width="2" stroke-linecap="round" stroke-linejoin="round" /><path d="M770.6 152 V164.3 a1.2 1.2 0 0 0 1.2 1.2 H779 M773 144.9 H780.4 L786.8 151.2 V156.8 M778.7 145 V150.7 a1.6 1.6 0 0 0 1.6 1.6 H786.3 M768.1 148.1 H773.2 M770.6 145.6 V150.6" fill="none" stroke="#4169ff" stroke-width="1.8" stroke-linecap="round" stroke-linejoin="round" /><path d="M788.3 159.8 L783.6 164.5 a1.3 1.3 0 0 0 1.9 1.9 L789.9 161.9 a2.4 2.4 0 0 0 -3.4 -3.4 L781.6 163.3 M787.2 161.6 L784.3 164.5" fill="none" stroke="#4169ff" stroke-width="1.25" stroke-linecap="round" stroke-linejoin="round" /><path d="M806 145.6 L815.3 148.2 L812.3 158.5 L803.1 156 Z M808.6 146.3 L808 148.4 M812.9 147.5 L812.3 149.6 M804.7 154 L804.2 156.3 M809 155.2 L808.4 157.4" fill="none" stroke="#4169ff" stroke-width="1.7" stroke-linecap="round" stroke-linejoin="round" /><path d="M801.8 159.8 L812.4 163 M816.5 160.2 L818.6 150.3 a3.6 3.6 0 0 1 2.7 -2.6 L824.5 146.8" fill="none" stroke="#4169ff" stroke-width="1.8" stroke-linecap="round" stroke-linejoin="round" /><circle cx="815.2" cy="163.6" r="2.6" fill="none" stroke="#4169ff" stroke-width="1.8"/><path d="M849.6 166.9 H836.9 a2 2 0 0 1 -2 -2 V146.6 a1.8 1.8 0 0 1 1.8 -1.8 H852 V160.5 M852.6 148.6 H856.5 V157.6" fill="none" stroke="#4169ff" stroke-width="1.6" stroke-linecap="round" stroke-linejoin="round" /><path d="M837.7 148.5 H845.4 V155.5 H837.7 Z M846.8 148.8 H850.6 M846.8 151.8 H850.6 M846.8 154.9 H850.6 M837.7 158.7 H850 M837.7 162.3 H849" fill="none" stroke="#4169ff" stroke-width="1.7" stroke-linecap="round" stroke-linejoin="round" /><circle cx="853.4" cy="163.3" r="3.8" fill="none" stroke="#4169ff" stroke-width="1.2"/><path d="M853.4 161.6 V165 M851.7 163.3 H855.1" fill="none" stroke="#4169ff" stroke-width="1.2" stroke-linecap="round" stroke-linejoin="round" /><path d="M997 159.4 C997 155.5 994.4 153.8 994.4 150.4 A5.6 5.6 0 0 1 1005.6 150.4 C1005.6 153.8 1003 155.5 1003 159.4" fill="none" stroke="#4169ff" stroke-width="2" stroke-linecap="round" stroke-linejoin="round" /><path d="M989 160.2 H1011 V164.4 H989 Z" fill="none" stroke="#4169ff" stroke-width="2" stroke-linecap="round" stroke-linejoin="round" /><path d="M989.4 166.6 H1010.6" fill="none" stroke="#4169ff" stroke-width="1.9" stroke-linecap="round" stroke-linejoin="round" /><path d="M1036 153 H1061 M1041.8 152.3 L1046 143.8 M1051.4 143.8 L1055.3 152.3 M1037.9 153.8 L1041 165.2 a1.2 1.2 0 0 0 1.2 0.9 H1055.6 a1.2 1.2 0 0 0 1.2 -0.9 L1059.8 153.8 M1044.5 157.4 V161.4 M1048.6 157.4 V161.4 M1052.8 157.4 V161.4" fill="none" stroke="#4169ff" stroke-width="1.9" stroke-linecap="round" stroke-linejoin="round" /><circle cx="727.9" cy="362.8" r="7.8" fill="none" stroke="#4169ff" stroke-width="1.9"/><path d="M733.5 368.4 L738 372.8" fill="none" stroke="#4169ff" stroke-width="2.1" stroke-linecap="round" stroke-linejoin="round" /><path d="M753.4 371.5 H749 a1.4 1.4 0 0 1 -1.4 -1.4 V356 a1.4 1.4 0 0 1 1.4 -1.4 H765 a1.4 1.4 0 0 1 1.4 1.4 V370.1 a1.4 1.4 0 0 1 -1.4 1.4 H760.5" fill="none" stroke="#4169ff" stroke-width="1.8" stroke-linecap="round" stroke-linejoin="round" /><path d="M748.3 355.4 H765.6 V357.9 H748.3 Z M754 365.4 L757.1 361.2 L760.2 365.4 Z" fill="#4169ff"/><path d="M757.1 364.5 V373" fill="none" stroke="#4169ff" stroke-width="2" stroke-linecap="round" stroke-linejoin="round" /><circle cx="749.8" cy="356.3" r="0.55" fill="#fff"/><circle cx="751.8" cy="356.3" r="0.55" fill="#fff"/><circle cx="753.8" cy="356.3" r="0.55" fill="#fff"/><rect x="240.7" y="389.7" width="12.4" height="12.6" rx="1.6" fill="none" stroke="#4169ff" stroke-width="1.4"/><path d="M243.9 396.0 H249.9 M246.9 393.0 V399.0" stroke="#4169ff" stroke-width="1.6" fill="none"/><rect x="240.7" y="424.9" width="12.4" height="12.6" rx="1.6" fill="none" stroke="#4169ff" stroke-width="1.4"/><path d="M243.9 431.2 H249.9 M246.9 428.2 V434.2" stroke="#4169ff" stroke-width="1.6" fill="none"/><rect x="240.7" y="460.5" width="12.4" height="12.6" rx="1.6" fill="none" stroke="#4169ff" stroke-width="1.4"/><path d="M243.9 466.8 H249.9 M246.9 463.8 V469.8" stroke="#4169ff" stroke-width="1.6" fill="none"/><rect x="240.7" y="496.9" width="12.4" height="12.6" rx="1.6" fill="none" stroke="#4169ff" stroke-width="1.4"/><path d="M243.9 503.2 H249.9 M246.9 500.2 V506.2" stroke="#4169ff" stroke-width="1.6" fill="none"/><circle cx="458.5" cy="580" r="7.1" fill="none" stroke="#4169ff" stroke-width="1.6"/><path d="M455.2 580 H461.8 M458.5 576.7 V583.3" fill="none" stroke="#4169ff" stroke-width="1.6" stroke-linecap="round" stroke-linejoin="round" /><path d="M238 612.5 H253 a1.5 1.5 0 0 1 1.5 1.5 V628.8 a1.5 1.5 0 0 1 -1.5 1.5 H238 a1.5 1.5 0 0 1 -1.5 -1.5 V614 a1.5 1.5 0 0 1 1.5 -1.5 Z" fill="none" stroke="#4169ff" stroke-width="2.1" stroke-linecap="round" stroke-linejoin="round" /><path d="M241.2 621.4 H249.8 M245.5 617.1 V625.7" fill="none" stroke="#4169ff" stroke-width="2.1" stroke-linecap="round" stroke-linejoin="round" stroke-linecap="butt"/><path d="M238 665.5 H252.5 a1.5 1.5 0 0 1 1.5 1.5 V681.3 a1.5 1.5 0 0 1 -1.5 1.5 H238 a1.5 1.5 0 0 1 -1.5 -1.5 V667.0 a1.5 1.5 0 0 1 1.5 -1.5 Z M241 674.2 H249.5 M245.2 669.9 V678.4" fill="none" stroke="#4169ff" stroke-width="2" stroke-linecap="round" stroke-linejoin="round" /><path d="M273.6 665.5 V678.5 M267.9 672.9 L273.6 678.5 L279.3 672.9" fill="none" stroke="#4169ff" stroke-width="1.5" stroke-linecap="round" stroke-linejoin="round" /><path d="M268.8 677.5 H265.8 a1.4 1.4 0 0 0 -1.4 1.4 V682.3 a1.4 1.4 0 0 0 1.4 1.4 H281.2 a1.4 1.4 0 0 0 1.4 -1.4 V678.9 a1.4 1.4 0 0 0 -1.4 -1.4 H277.6" fill="none" stroke="#4169ff" stroke-width="1.5" stroke-linecap="round" stroke-linejoin="round" /><circle cx="279.2" cy="680.3" r="0.6" fill="#4169ff" stroke="none" stroke-width="0"/><circle cx="300.1" cy="672.9" r="6.9" fill="none" stroke="#4169ff" stroke-width="1.5"/><path d="M305.1 677.9 L311 683.6" fill="none" stroke="#4169ff" stroke-width="1.6" stroke-linecap="round" stroke-linejoin="round" /><circle cx="936.5" cy="673.0" r="6.8" fill="none" stroke="#4169ff" stroke-width="1.6"/><path d="M941.4 677.9 L946.8 683.1" fill="none" stroke="#4169ff" stroke-width="1.7" stroke-linecap="round" stroke-linejoin="round" /><rect x="953.9" y="666.5" width="17.2" height="15.4" rx="1.8" fill="none" stroke="#4169ff" stroke-width="1.8"/><rect x="953" y="665.6" width="19" height="7.1" rx="1.8" fill="#4169ff"/><path d="M238 714.9 H252.5 a1.5 1.5 0 0 1 1.5 1.5 V730.6999999999999 a1.5 1.5 0 0 1 -1.5 1.5 H238 a1.5 1.5 0 0 1 -1.5 -1.5 V716.4 a1.5 1.5 0 0 1 1.5 -1.5 Z M241 723.6 H249.5 M245.2 719.3 V727.8" fill="none" stroke="#4169ff" stroke-width="2" stroke-linecap="round" stroke-linejoin="round" /><path d="M273.6 714.9 V727.9 M267.9 722.3 L273.6 727.9 L279.3 722.3" fill="none" stroke="#4169ff" stroke-width="1.5" stroke-linecap="round" stroke-linejoin="round" /><path d="M268.8 726.9 H265.8 a1.4 1.4 0 0 0 -1.4 1.4 V731.6999999999999 a1.4 1.4 0 0 0 1.4 1.4 H281.2 a1.4 1.4 0 0 0 1.4 -1.4 V728.3 a1.4 1.4 0 0 0 -1.4 -1.4 H277.6" fill="none" stroke="#4169ff" stroke-width="1.5" stroke-linecap="round" stroke-linejoin="round" /><circle cx="279.2" cy="729.6999999999999" r="0.6" fill="#4169ff" stroke="none" stroke-width="0"/><circle cx="300.1" cy="722.3" r="6.9" fill="none" stroke="#4169ff" stroke-width="1.5"/><path d="M305.1 727.3 L311 733.0" fill="none" stroke="#4169ff" stroke-width="1.6" stroke-linecap="round" stroke-linejoin="round" /><circle cx="936.5" cy="722.4" r="6.8" fill="none" stroke="#4169ff" stroke-width="1.6"/><path d="M941.4 727.3 L946.8 732.5" fill="none" stroke="#4169ff" stroke-width="1.7" stroke-linecap="round" stroke-linejoin="round" /><rect x="953.9" y="715.9" width="17.2" height="15.4" rx="1.8" fill="none" stroke="#4169ff" stroke-width="1.8"/><rect x="953" y="715.0" width="19" height="7.1" rx="1.8" fill="#4169ff"/><path d="M238 764.3 H252.5 a1.5 1.5 0 0 1 1.5 1.5 V780.0999999999999 a1.5 1.5 0 0 1 -1.5 1.5 H238 a1.5 1.5 0 0 1 -1.5 -1.5 V765.8 a1.5 1.5 0 0 1 1.5 -1.5 Z M241 773.0 H249.5 M245.2 768.6999999999999 V777.1999999999999" fill="none" stroke="#4169ff" stroke-width="2" stroke-linecap="round" stroke-linejoin="round" /><path d="M273.6 764.3 V777.3 M267.9 771.6999999999999 L273.6 777.3 L279.3 771.6999999999999" fill="none" stroke="#4169ff" stroke-width="1.5" stroke-linecap="round" stroke-linejoin="round" /><path d="M268.8 776.3 H265.8 a1.4 1.4 0 0 0 -1.4 1.4 V781.0999999999999 a1.4 1.4 0 0 0 1.4 1.4 H281.2 a1.4 1.4 0 0 0 1.4 -1.4 V777.6999999999999 a1.4 1.4 0 0 0 -1.4 -1.4 H277.6" fill="none" stroke="#4169ff" stroke-width="1.5" stroke-linecap="round" stroke-linejoin="round" /><circle cx="279.2" cy="779.0999999999999" r="0.6" fill="#4169ff" stroke="none" stroke-width="0"/><circle cx="300.1" cy="771.6999999999999" r="6.9" fill="none" stroke="#4169ff" stroke-width="1.5"/><path d="M305.1 776.6999999999999 L311 782.4" fill="none" stroke="#4169ff" stroke-width="1.6" stroke-linecap="round" stroke-linejoin="round" /><circle cx="936.5" cy="771.8" r="6.8" fill="none" stroke="#4169ff" stroke-width="1.6"/><path d="M941.4 776.6999999999999 L946.8 781.9" fill="none" stroke="#4169ff" stroke-width="1.7" stroke-linecap="round" stroke-linejoin="round" /><rect x="953.9" y="765.3" width="17.2" height="15.4" rx="1.8" fill="none" stroke="#4169ff" stroke-width="1.8"/><rect x="953" y="764.4" width="19" height="7.1" rx="1.8" fill="#4169ff"/><path d="M238 813.7 H252.5 a1.5 1.5 0 0 1 1.5 1.5 V829.5 a1.5 1.5 0 0 1 -1.5 1.5 H238 a1.5 1.5 0 0 1 -1.5 -1.5 V815.2 a1.5 1.5 0 0 1 1.5 -1.5 Z M241 822.4000000000001 H249.5 M245.2 818.1 V826.6" fill="none" stroke="#4169ff" stroke-width="2" stroke-linecap="round" stroke-linejoin="round" /><path d="M273.6 813.7 V826.7 M267.9 821.1 L273.6 826.7 L279.3 821.1" fill="none" stroke="#4169ff" stroke-width="1.5" stroke-linecap="round" stroke-linejoin="round" /><path d="M268.8 825.7 H265.8 a1.4 1.4 0 0 0 -1.4 1.4 V830.5 a1.4 1.4 0 0 0 1.4 1.4 H281.2 a1.4 1.4 0 0 0 1.4 -1.4 V827.1 a1.4 1.4 0 0 0 -1.4 -1.4 H277.6" fill="none" stroke="#4169ff" stroke-width="1.5" stroke-linecap="round" stroke-linejoin="round" /><circle cx="279.2" cy="828.5" r="0.6" fill="#4169ff" stroke="none" stroke-width="0"/><circle cx="300.1" cy="821.1" r="6.9" fill="none" stroke="#4169ff" stroke-width="1.5"/><path d="M305.1 826.1 L311 831.8000000000001" fill="none" stroke="#4169ff" stroke-width="1.6" stroke-linecap="round" stroke-linejoin="round" /><circle cx="936.5" cy="821.2" r="6.8" fill="none" stroke="#4169ff" stroke-width="1.6"/><path d="M941.4 826.1 L946.8 831.3000000000001" fill="none" stroke="#4169ff" stroke-width="1.7" stroke-linecap="round" stroke-linejoin="round" /><rect x="953.9" y="814.7" width="17.2" height="15.4" rx="1.8" fill="none" stroke="#4169ff" stroke-width="1.8"/><rect x="953" y="813.8000000000001" width="19" height="7.1" rx="1.8" fill="#4169ff"/><path d="M1566.3 307 H1557 a2 2 0 0 1 -2 -2 V292 a2 2 0 0 1 2 -2 H1561.6 L1564.8 293.6 H1573.5 a2 2 0 0 1 2 2 V297.8" fill="none" stroke="#4169ff" stroke-width="2" stroke-linecap="round" stroke-linejoin="round" /><rect x="1568.3" y="300.6" width="9" height="9.4" rx="1.6" fill="#fff" stroke="#4169ff" stroke-width="1.35"/><path d="M1568.8 309.2 L1572.8 305.4 L1576.8 309.2" fill="none" stroke="#4169ff" stroke-width="1.3" stroke-linecap="round" stroke-linejoin="round" /><circle cx="1570.7" cy="303.2" r="0.75" fill="#4169ff" stroke="none" stroke-width="0"/><path d="M1908.2 101.8 L1912.6 95 L1917 101.8 Z" fill="#8c8c8c"/><path d="M1908.2 934.2 L1912.6 940.8 L1917 934.2 Z" fill="#8c8c8c"/><path d="M1888 249.5 L1892.3 243.5 L1896.7 249.5 Z" fill="#8c8c8c"/><path d="M1888 557.2 L1892.3 563.4 L1896.7 557.2 Z" fill="#8c8c8c"/><path d="M1522.9 381.9 L1528.6 386 L1522.9 390 Z" fill="#eeeeee"/></svg>
</body></html>
